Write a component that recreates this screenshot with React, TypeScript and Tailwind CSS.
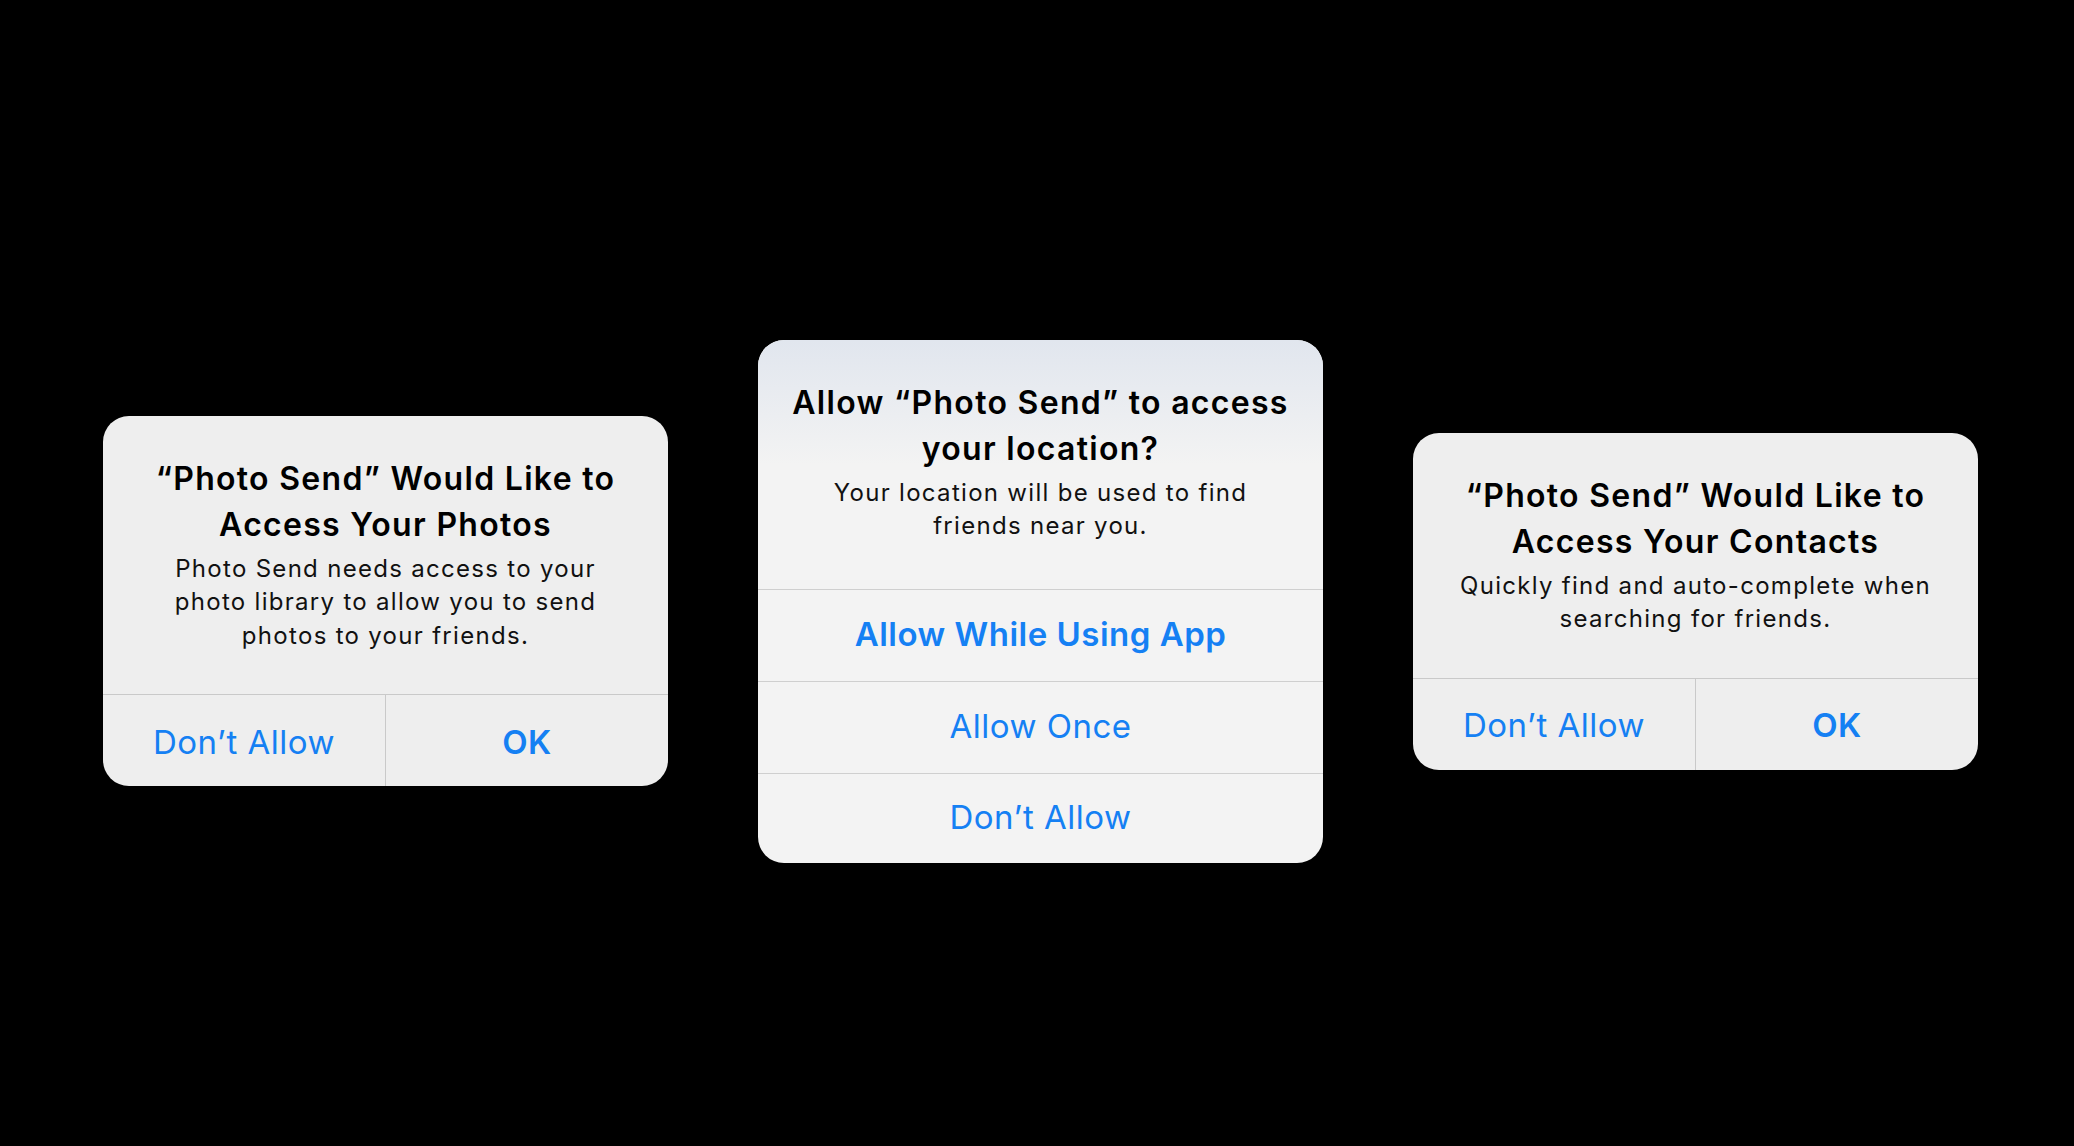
import { FC, ReactNode } from "react"

const font = { fontFamily: "Inter, 'Noto Sans', sans-serif" }

interface AlertProps {
	title: ReactNode
	message: ReactNode
	bodyClass: string
	cardClass: string
	children: ReactNode
}

const Alert: FC<AlertProps> = ({ title, message, bodyClass, cardClass, children }) => {
	return (
		<div className={`w-[565px] overflow-hidden rounded-[26px] ${cardClass}`}>
			<div className={`px-4 pt-[40px] text-center ${bodyClass}`}>
				<h2 className="text-[32px] leading-[46px] font-semibold tracking-[1.3px] whitespace-nowrap text-black">{title}</h2>
				<p className="mt-1 text-[24px] leading-[33.5px] tracking-[1.3px] whitespace-nowrap text-[#111]">{message}</p>
			</div>
			{children}
		</div>
	)
}

const SideButtons: FC = () => (
	<div className="flex h-[92px] border-t border-[#c9c9c9]">
		<button type="button" className="flex-1 pt-1 text-[33px] tracking-[0.5px] text-[#1580f3]">Don’t Allow</button>
		<div className="w-px bg-[#c9c9c9]" />
		<button type="button" className="flex-1 pt-1 text-[33px] font-semibold tracking-[0.5px] text-[#1580f3]">OK</button>
	</div>
)

export default function App() {
	return (
		<div className="flex h-[1146px] w-full items-center justify-center gap-[90px] bg-black pt-[56px] pl-[7px]" style={font}>
			<Alert
				cardClass="bg-[#eeeeee]"
				bodyClass="pb-[42px]"
				title={<>“Photo Send” Would Like to<br />Access Your Photos</>}
				message={<>Photo Send needs access to your<br />photo library to allow you to send<br />photos to your friends.</>}
			>
				<SideButtons />
			</Alert>

			<Alert
				cardClass="bg-[#f3f3f3]"
				bodyClass="pb-[46px] bg-[linear-gradient(to_bottom,#e1e6ee,#f3f3f3_50%)]"
				title={<>Allow “Photo Send” to access<br />your location?</>}
				message={<>Your location will be used to find<br />friends near you.</>}
			>
				<div className="flex flex-col">
					<button type="button" className="h-[92px] border-t border-[#cfcfcf] text-[33px] font-semibold tracking-[0.5px] text-[#1580f3]">Allow While Using App</button>
					<button type="button" className="h-[92px] border-t border-[#cfcfcf] text-[33px] tracking-[0.5px] text-[#1580f3]">Allow Once</button>
					<button type="button" className="h-[90px] border-t border-[#cfcfcf] text-[33px] tracking-[0.5px] text-[#1580f3]">Don’t Allow</button>
				</div>
			</Alert>

			<Alert
				cardClass="bg-[#eeeeee]"
				bodyClass="pb-[42px]"
				title={<>“Photo Send” Would Like to<br />Access Your Contacts</>}
				message={<>Quickly find and auto-complete when<br />searching for friends.</>}
			>
				<SideButtons />
			</Alert>
		</div>
	)
}
